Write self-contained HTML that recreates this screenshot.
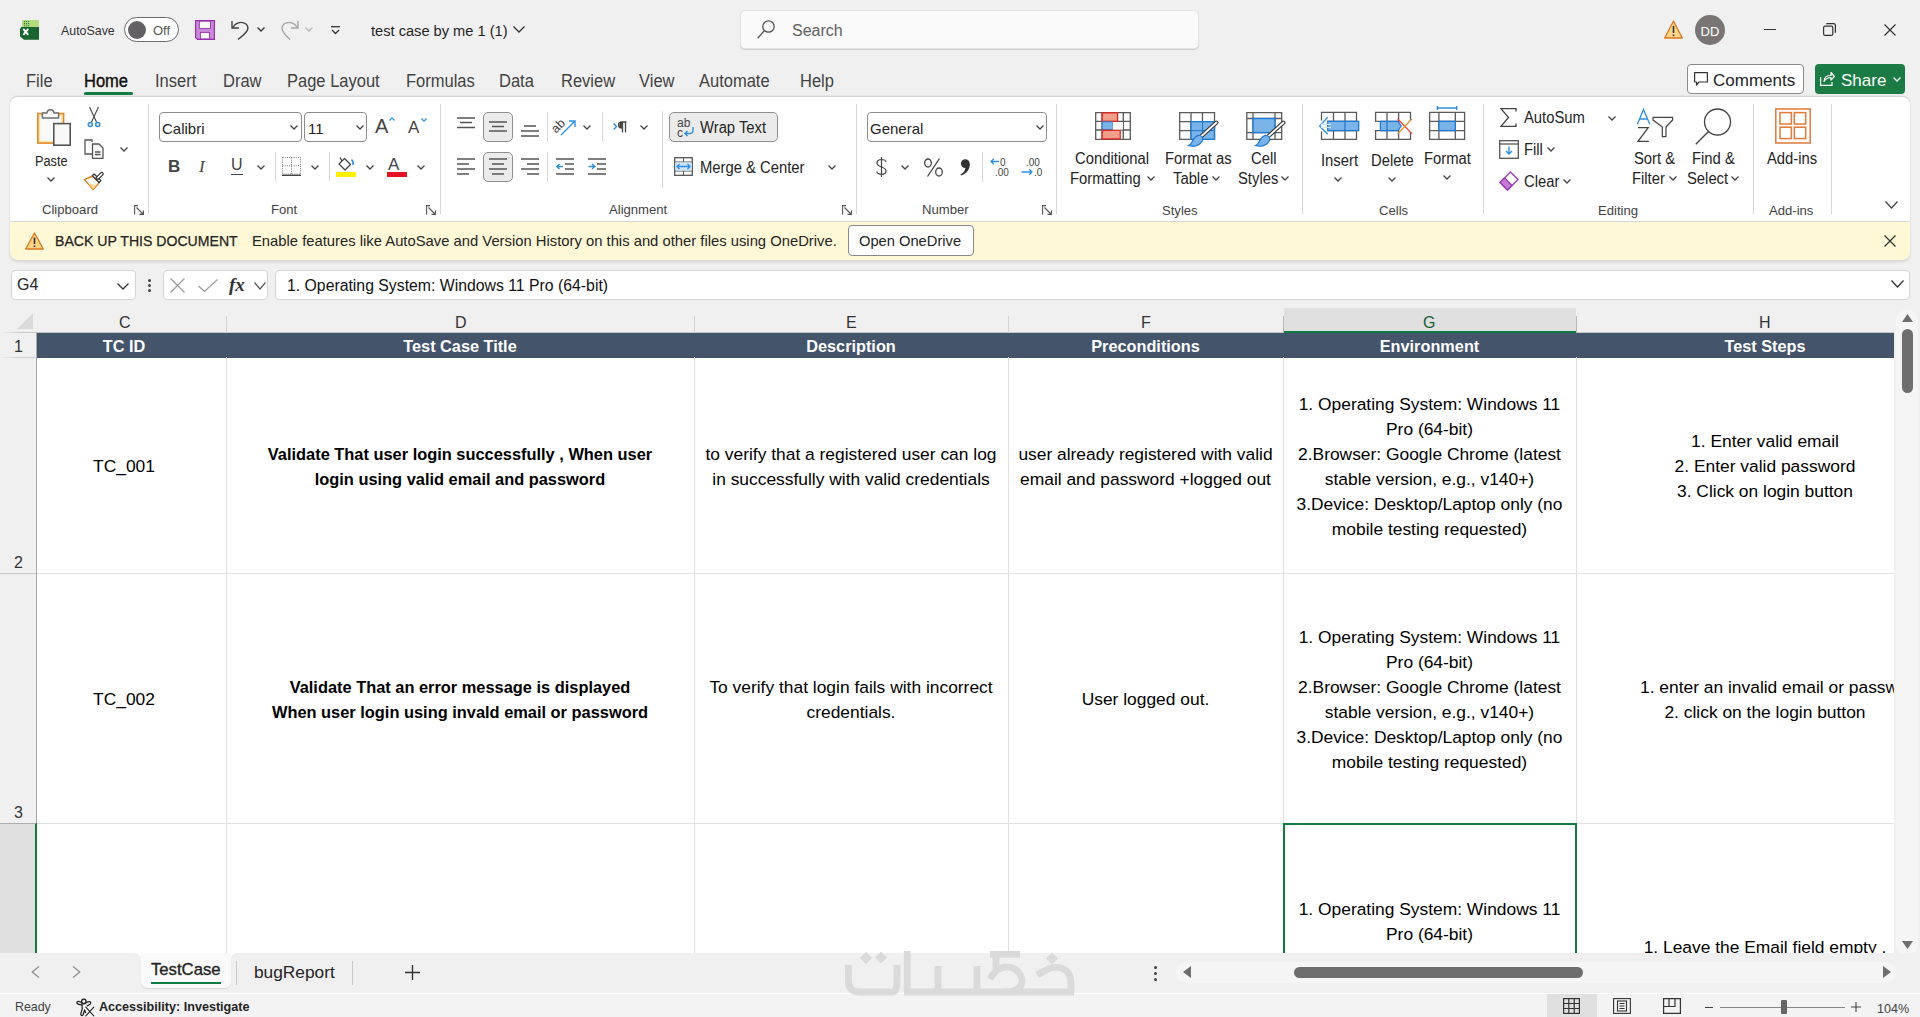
<!DOCTYPE html>
<html><head><meta charset="utf-8">
<style>
*{margin:0;padding:0;box-sizing:border-box}
html,body{width:1920px;height:1017px;overflow:hidden;background:#f0f0f0;font-family:"Liberation Sans",sans-serif;color:#242424}
.a{position:absolute}
.t{position:absolute;white-space:nowrap;line-height:1}
svg{position:absolute;overflow:visible}
/* ribbon */
#ribbon{position:absolute;left:10px;top:97px;width:1900px;height:125px;background:#fff;border-radius:8px 8px 0 0;box-shadow:0 -0.5px 2px rgba(0,0,0,.15);border-bottom:1px solid #d6d6d6}
.sep{position:absolute;width:1px;background:#d6d6d6}
.glab{position:absolute;font-size:13px;color:#333;white-space:nowrap;line-height:1}
.dd{position:absolute;background:#fff;border:1px solid #8c8c8c;border-radius:4px}
/* grid */
#grid{position:absolute;left:0;top:308px;width:1920px;height:645px;overflow:hidden}
.cell{position:absolute;display:flex;align-items:center;justify-content:center;text-align:center;font-size:17.4px;line-height:25px;color:#000;padding-top:2px}
.colh{font-size:16px;color:#333}
.rowh{font-size:16px;color:#333}
.gl{background:#e1e1e1}
.hd{position:absolute;top:26px;height:24px;display:flex;align-items:center;justify-content:center;color:#fff;font-weight:700;font-size:16.3px;white-space:nowrap}
.cell.b{font-weight:700;font-size:16.4px}
.mt{top:73px;font-size:17.5px;color:#424242;transform:scaleX(.943);transform-origin:0 0}
.rl{font-size:16px;color:#242424;transform:scaleX(.925);transform-origin:0 0}
.glab{font-size:13.1px;color:#424242}
.chv{fill:none;stroke:#444;stroke-width:1.3}
.lch{fill:none;stroke:#555;stroke-width:1.1}
.ln{fill:none;stroke:#555;stroke-width:1.3}
.selb{position:absolute;background:#ebebeb;border:1px solid #8f8f8f;border-radius:5px}
</style></head>
<body>
<!-- TITLE BAR -->
<div id="title">
 <!-- excel icon -->
 <svg style="left:20px;top:20px" width="20" height="20" viewBox="0 0 20 20">
  <path d="M2 1 Q2 0 3 0 H18 Q19 0 19 1 V7 H2Z" fill="#b3dd7c"/>
  <g fill="#1f6b34"><circle cx="4.5" cy="1.6" r="0.65"/><circle cx="6.6" cy="1.6" r="0.65"/><circle cx="8.7" cy="1.6" r="0.65"/><circle cx="4.5" cy="3.7" r="0.65"/><circle cx="6.6" cy="3.7" r="0.65"/><circle cx="8.7" cy="3.7" r="0.65"/><circle cx="4.5" cy="5.8" r="0.65"/><circle cx="6.6" cy="5.8" r="0.65"/><circle cx="8.7" cy="5.8" r="0.65"/></g>
  <path d="M1.5 7 H19 V19.8 H4 L0 16.5 V8.5Z" fill="#19652f"/>
  <path d="M3.3 8.8 L8.2 14.8 M8.2 8.8 L3.3 14.8" stroke="#fff" stroke-width="1.9"/>
 </svg>
 <div class="t" style="left:61px;top:25px;font-size:12.4px;color:#333">AutoSave</div>
 <div class="a" style="left:124px;top:17px;width:55px;height:25px;border:1px solid #6b6b6b;border-radius:13px;background:#fff"></div>
 <div class="a" style="left:128px;top:21px;width:18px;height:18px;border-radius:50%;background:#636163"></div>
 <div class="t" style="left:153px;top:24px;font-size:13px;color:#555">Off</div>
 <!-- save -->
 <svg style="left:195px;top:20px" width="20" height="20" viewBox="0 0 20 20">
  <path d="M0.6 0.6 H19.4 V19.4 H2.5 L0.6 17.5Z" fill="#c98bd8" stroke="#9a2fae" stroke-width="1.2"/>
  <rect x="4.3" y="1.2" width="11.2" height="7.2" fill="#fafafa" stroke="#9a2fae" stroke-width="0.9"/>
  <rect x="5.4" y="12.4" width="9.2" height="6.5" fill="#fafafa" stroke="#9a2fae" stroke-width="0.9"/>
 </svg>
 <!-- undo -->
 <svg style="left:231px;top:20px" width="20" height="20" viewBox="0 0 20 20" fill="none" stroke="#424242" stroke-width="1.4">
  <path d="M1 1 V8 H8"/><path d="M1.5 8 C4 3 10 0.5 15 4 C19 8 17 12 7 19.5"/>
 </svg>
 <svg style="left:257px;top:27px" width="8" height="5" viewBox="0 0 8 5" fill="none" stroke="#333" stroke-width="1.3"><path d="M0.5 0.5 L4 4 L7.5 0.5"/></svg>
 <!-- redo -->
 <svg style="left:279px;top:20px" width="20" height="20" viewBox="0 0 20 20" fill="none" stroke="#a6a6a6" stroke-width="1.4">
  <path d="M19 1 V8 H12"/><path d="M18.5 8 C16 3 10 0.5 5 4 C1 8 3 12 11 19.5"/>
 </svg>
 <svg style="left:305px;top:27px" width="8" height="5" viewBox="0 0 8 5" fill="none" stroke="#b8b8b8" stroke-width="1.3"><path d="M0.5 0.5 L4 4 L7.5 0.5"/></svg>
 <svg style="left:331px;top:26px" width="9" height="9" viewBox="0 0 9 9" fill="none" stroke="#333" stroke-width="1.3"><path d="M0 0.7 H9"/><path d="M1 4 L4.5 7.5 L8 4"/></svg>
 <div class="t" style="left:371px;top:23px;font-size:15.4px;color:#242424;transform:scaleX(.95);transform-origin:0 0">test case by me 1 (1)</div>
 <svg style="left:513px;top:26px" width="12" height="7" viewBox="0 0 12 7" fill="none" stroke="#333" stroke-width="1.3"><path d="M0.5 0.5 L6 6 L11.5 0.5"/></svg>
 <!-- search -->
 <div class="a" style="left:740px;top:10px;width:459px;height:39px;background:#fafafa;border:1px solid #e3e3e3;border-radius:5px;box-shadow:0 1px 1px rgba(0,0,0,.15)"></div>
 <svg style="left:757px;top:20px" width="18" height="19" viewBox="0 0 18 19" fill="none" stroke="#555" stroke-width="1.3"><circle cx="11.5" cy="6.5" r="5.7"/><path d="M7.5 10.5 L0.7 18.3"/></svg>
 <div class="t" style="left:792px;top:23px;font-size:16px;color:#616161">Search</div>
 <!-- right -->
 <svg style="left:1664px;top:20px" width="19" height="19" viewBox="0 0 19 19"><path d="M9.5 1 L18.3 18 H0.7Z" fill="#fcd589" stroke="#d9781f" stroke-width="1.3" stroke-linejoin="round"/><rect x="8.7" y="6" width="1.6" height="7" fill="#333"/><rect x="8.7" y="14.5" width="1.6" height="1.6" fill="#333"/></svg>
 <div class="a" style="left:1695px;top:15px;width:30px;height:30px;border-radius:50%;background:#7a7575"></div>
 <div class="t" style="left:1699px;top:25px;font-size:13px;color:#fff;width:22px;text-align:center">DD</div>
 <div class="a" style="left:1764px;top:29px;width:12px;height:1.3px;background:#333"></div>
 <svg style="left:1823px;top:23px" width="13" height="13" viewBox="0 0 13 13" fill="none" stroke="#333" stroke-width="1.2"><rect x="0.6" y="3.2" width="9.2" height="9.2" rx="1.5"/><path d="M3.2 1.2 C3.5 0.8 4 0.6 4.5 0.6 H10.5 C11.6 0.6 12.4 1.4 12.4 2.5 V8.5 C12.4 9 12.2 9.5 11.8 9.8"/></svg>
 <svg style="left:1884px;top:24px" width="12" height="12" viewBox="0 0 12 12" fill="none" stroke="#333" stroke-width="1.2"><path d="M0.5 0.5 L11.5 11.5 M11.5 0.5 L0.5 11.5"/></svg>
</div>
<!-- MENU -->
<div id="menu">
 <div class="t mt" style="left:26px">File</div>
 <div class="t mt" style="left:84px;color:#111;-webkit-text-stroke:0.4px #111">Home</div>
 <div class="a" style="left:84px;top:92px;width:49px;height:3px;border-radius:2px;background:#107c41"></div>
 <div class="t mt" style="left:155px">Insert</div>
 <div class="t mt" style="left:223px">Draw</div>
 <div class="t mt" style="left:287px">Page Layout</div>
 <div class="t mt" style="left:406px">Formulas</div>
 <div class="t mt" style="left:499px">Data</div>
 <div class="t mt" style="left:561px">Review</div>
 <div class="t mt" style="left:639px">View</div>
 <div class="t mt" style="left:699px">Automate</div>
 <div class="t mt" style="left:800px">Help</div>
 <div class="a" style="left:1687px;top:64px;width:117px;height:30px;background:#fff;border:1px solid #8a8a8a;border-radius:4px"></div>
 <svg style="left:1694px;top:72px" width="15" height="15" viewBox="0 0 15 15" fill="none" stroke="#333" stroke-width="1.2"><path d="M0.6 0.6 H13.4 V10 H5 L2.5 13 V10 H0.6Z" stroke-linejoin="round"/></svg>
 <div class="t" style="left:1713px;top:72px;font-size:17px;color:#242424">Comments</div>
 <div class="a" style="left:1815px;top:64px;width:90px;height:30px;background:#1a7b45;border-radius:4px"></div>
 <svg style="left:1820px;top:71px" width="15" height="15" viewBox="0 0 15 15" fill="none" stroke="#fff" stroke-width="1.2"><path d="M0.6 6 V14.4 H12 V11"/><path d="M4 10.5 C4 6 7 4.5 11 4.5 V1.5 L14.4 5.5 L11 9 V6.5 C7.5 6.5 5.5 8 4 10.5Z" stroke-linejoin="round"/></svg>
 <div class="t" style="left:1841px;top:72px;font-size:17px;color:#fff">Share</div>
 <svg style="left:1893px;top:77px" width="8" height="5" viewBox="0 0 8 5" fill="none" stroke="#fff" stroke-width="1.3"><path d="M0.5 0.5 L4 4 L7.5 0.5"/></svg>
</div>
<!-- RIBBON -->
<div id="ribbon"></div>
<div id="rb">
 <!-- CLIPBOARD -->
 <svg style="left:37px;top:108px" width="34" height="38" viewBox="0 0 34 38">
  <rect x="0.8" y="5.5" width="25.8" height="29.6" fill="#fde3a8" stroke="#e08a2c" stroke-width="1.6"/>
  <rect x="3.2" y="8" width="21" height="24.8" fill="#f8f9fa"/>
  <path d="M5.4 10 V5 H10 C10.3 0.6 16.7 0.6 17 5 H21.6 V10Z" fill="#fafafa" stroke="#6e6e6e" stroke-width="1.5" stroke-linejoin="round"/>
  <rect x="16.8" y="15.6" width="16.4" height="21.6" fill="#f8f8f8" stroke="#555" stroke-width="1.6"/>
 </svg>
 <div class="t rl" style="left:35px;top:154px;font-size:14px;transform:scaleX(.91)">Paste</div>
 <svg class="chv" style="left:47px;top:177px" width="8" height="5" viewBox="0 0 8 5"><path d="M0.5 0.5 L4 4 L7.5 0.5"/></svg>
 <svg style="left:87px;top:107px" width="14" height="20" viewBox="0 0 14 20" fill="none">
  <path d="M2.5 0 L9.5 15 M11.5 0 L4.5 15" stroke="#444" stroke-width="1.1"/>
  <circle cx="3.3" cy="17.5" r="2" stroke="#2f8ee0" stroke-width="1.6"/><circle cx="10.7" cy="17.5" r="2" stroke="#2f8ee0" stroke-width="1.6"/>
 </svg>
 <svg style="left:84px;top:139px" width="20" height="20" viewBox="0 0 20 20" fill="none" stroke="#555" stroke-width="1.3">
  <path d="M8 3 V1 H1 V15 H8"/><path d="M8.5 5 H15 L19 9 V19.3 H8.5Z" fill="#fafafa" stroke-linejoin="round"/><path d="M11 13 H16.5 M11 15.5 H16.5"/>
 </svg>
 <svg class="chv" style="left:120px;top:147px" width="8" height="5" viewBox="0 0 8 5"><path d="M0.5 0.5 L4 4 L7.5 0.5"/></svg>
 <svg style="left:84px;top:171px" width="20" height="20" viewBox="0 0 20 20">
  <path d="M0.4 8.6 L8.6 5 L15.2 11.6 L9.2 18.6Z" fill="#fff" stroke="#e07a1a" stroke-width="1.4" stroke-linejoin="round"/>
  <path d="M4.3 12.8 L12.6 14 L9.2 18.3Z" fill="#fcd38a"/>
  <path d="M8.3 4.8 L10.2 3 L16.9 9.7 L15.1 11.5Z" fill="#fff" stroke="#333" stroke-width="1.2" stroke-linejoin="round"/>
  <path d="M12 6.6 L16.8 1.8 C17.4 1.2 18.3 1.2 18.8 1.8 C19.4 2.4 19.4 3.2 18.8 3.8 L14 8.6Z" fill="#fff" stroke="#333" stroke-width="1.2" stroke-linejoin="round"/>
 </svg>
 <div class="t glab" style="left:42px;top:203px">Clipboard</div>
 <svg class="lch" style="left:134px;top:205px" width="10" height="10" viewBox="0 0 10 10"><path d="M0.6 9.4 V0.6 H4 M9.4 6 V9.4 H6 M2.5 2.5 L9 9"/><path d="M9.4 5.5 V9.4 H5.5" /></svg>
 <div class="sep" style="left:148px;top:104px;height:110px"></div>
 <!-- FONT -->
 <div class="dd" style="left:159px;top:112px;width:143px;height:30px"></div>
 <div class="t" style="left:162px;top:121px;font-size:15px;color:#242424">Calibri</div>
 <svg class="chv" style="left:290px;top:125px" width="8" height="5" viewBox="0 0 8 5"><path d="M0.5 0.5 L4 4 L7.5 0.5"/></svg>
 <div class="dd" style="left:304px;top:112px;width:63px;height:30px"></div>
 <div class="t" style="left:308px;top:121px;font-size:15px;color:#242424">11</div>
 <svg class="chv" style="left:356px;top:125px" width="8" height="5" viewBox="0 0 8 5"><path d="M0.5 0.5 L4 4 L7.5 0.5"/></svg>
 <div class="t" style="left:375px;top:116px;font-size:20px;color:#444">A</div>
 <svg style="left:389px;top:117px" width="6" height="4" viewBox="0 0 6 4" fill="none" stroke="#2f8ee0" stroke-width="1.2"><path d="M0.5 3.5 L3 0.8 L5.5 3.5"/></svg>
 <div class="t" style="left:408px;top:119px;font-size:17px;color:#444">A</div>
 <svg style="left:421px;top:118px" width="6" height="4" viewBox="0 0 6 4" fill="none" stroke="#2f8ee0" stroke-width="1.2"><path d="M0.5 0.5 L3 3.2 L5.5 0.5"/></svg>
 <div class="t" style="left:168px;top:158px;font-size:17px;font-weight:700;color:#444">B</div>
 <div class="t" style="left:199px;top:158px;font-size:17px;font-style:italic;font-family:'Liberation Serif',serif;color:#444">I</div>
 <div class="t" style="left:231px;top:157px;font-size:16px;color:#444">U</div>
 <div class="a" style="left:231px;top:174px;width:12px;height:1.2px;background:#444"></div>
 <svg class="chv" style="left:257px;top:165px" width="8" height="5" viewBox="0 0 8 5"><path d="M0.5 0.5 L4 4 L7.5 0.5"/></svg>
 <div class="sep" style="left:275px;top:152px;height:29px"></div>
 <svg style="left:282px;top:157px" width="19" height="19" viewBox="0 0 19 19" fill="none">
  <path d="M0.5 0.5 H18.5 V17 H0.5Z M9.5 0.5 V17 M0.5 8.8 H18.5" stroke="#777" stroke-width="1" stroke-dasharray="1 1.2"/>
  <path d="M0 18.3 H19" stroke="#444" stroke-width="1.4"/>
 </svg>
 <svg class="chv" style="left:311px;top:165px" width="8" height="5" viewBox="0 0 8 5"><path d="M0.5 0.5 L4 4 L7.5 0.5"/></svg>
 <div class="sep" style="left:329px;top:152px;height:29px"></div>
 <svg style="left:336px;top:156px" width="20" height="22" viewBox="0 0 20 22">
  <path d="M3 8 L8.5 2.5 L14.5 8.5 L9 14Z" fill="#fff" stroke="#444" stroke-width="1.3" stroke-linejoin="round"/>
  <path d="M6 5 L4 1.5" stroke="#444" stroke-width="1.3"/>
  <path d="M15.5 3.5 C17 5 17.5 7 17 9" fill="none" stroke="#2f8ee0" stroke-width="1.6"/>
  <rect x="0" y="16" width="20" height="5" fill="#ffef00"/>
 </svg>
 <svg class="chv" style="left:366px;top:165px" width="8" height="5" viewBox="0 0 8 5"><path d="M0.5 0.5 L4 4 L7.5 0.5"/></svg>
 <div class="t" style="left:388px;top:156px;font-size:17px;color:#444">A</div>
 <div class="a" style="left:387px;top:172px;width:20px;height:5px;background:#e81123"></div>
 <svg class="chv" style="left:417px;top:165px" width="8" height="5" viewBox="0 0 8 5"><path d="M0.5 0.5 L4 4 L7.5 0.5"/></svg>
 <div class="t glab" style="left:271px;top:203px">Font</div>
 <svg class="lch" style="left:426px;top:205px" width="10" height="10" viewBox="0 0 10 10"><path d="M0.6 9.4 V0.6 H4 M2.5 2.5 L9 9 M9.4 5.5 V9.4 H5.5"/></svg>
 <div class="sep" style="left:440px;top:104px;height:110px"></div>
 <!-- ALIGNMENT -->
 <svg class="ln" style="left:457px;top:117px" width="18" height="12" viewBox="0 0 18 12"><path d="M0 1 H18 M3 5.5 H15 M0 10.5 H18"/></svg>
 <div class="selb" style="left:483px;top:112px;width:30px;height:30px"></div>
 <svg class="ln" style="left:489px;top:121px" width="18" height="11" viewBox="0 0 18 11"><path d="M0 1 H18 M3 5.5 H15 M0 10 H18"/></svg>
 <svg class="ln" style="left:521px;top:125px" width="18" height="12" viewBox="0 0 18 12"><path d="M3 1 H15 M0 6 H18 M0 11 H18"/></svg>
 <div class="sep" style="left:547px;top:112px;height:30px"></div>
 <svg style="left:555px;top:116px" width="21" height="20" viewBox="0 0 21 20" fill="none">
  <text x="-3" y="12" transform="rotate(-45 6 10)" font-family="Liberation Sans" font-size="12.5" fill="#444">ab</text>
  <path d="M6 19 L20 5 M14 5 H20 V11" stroke="#2f8ee0" stroke-width="1.4"/>
 </svg>
 <svg class="chv" style="left:583px;top:125px" width="8" height="5" viewBox="0 0 8 5"><path d="M0.5 0.5 L4 4 L7.5 0.5"/></svg>
 <div class="sep" style="left:602px;top:112px;height:30px"></div>
 <svg style="left:613px;top:121px" width="15" height="12" viewBox="0 0 15 12" fill="none">
  <path d="M0.7 2.5 L3.5 5.5 L0.7 8.5" stroke="#2f8ee0" stroke-width="1.4"/>
  <path d="M9.5 1 V11.5 M12.5 1 V11.5 M13.5 1 H9 C6.5 1 5.5 2.5 5.5 4 C5.5 5.5 6.5 7 9 7" stroke="#444" stroke-width="1.3"/>
  <path d="M9 1.5 C7 1.5 6.2 2.8 6.2 4 C6.2 5.2 7 6.5 9 6.5Z" fill="#444"/>
 </svg>
 <svg class="chv" style="left:640px;top:125px" width="8" height="5" viewBox="0 0 8 5"><path d="M0.5 0.5 L4 4 L7.5 0.5"/></svg>
 <div class="sep" style="left:662px;top:111px;height:77px"></div>
 <div class="selb" style="left:669px;top:112px;width:109px;height:30px"></div>
 <svg style="left:677px;top:118px" width="18" height="19" viewBox="0 0 18 19" fill="none">
  <text x="0" y="9" font-family="Liberation Sans" font-size="12" fill="#444">ab</text>
  <text x="0" y="18.5" font-family="Liberation Sans" font-size="12" fill="#444">c</text>
  <path d="M16 9 V12.5 C16 14.5 14.5 15.5 12.5 15.5 H8 M10.5 13 L8 15.5 L10.5 18" stroke="#2f8ee0" stroke-width="1.4"/>
 </svg>
 <div class="t rl" style="left:700px;top:120px">Wrap Text</div>
 <svg class="ln" style="left:457px;top:158px" width="18" height="17" viewBox="0 0 18 17"><path d="M0 1 H18 M0 6 H12 M0 11 H18 M0 16 H12"/></svg>
 <div class="selb" style="left:483px;top:152px;width:30px;height:30px"></div>
 <svg class="ln" style="left:489px;top:158px" width="18" height="17" viewBox="0 0 18 17"><path d="M0 1 H18 M3 6 H15 M0 11 H18 M3 16 H15"/></svg>
 <svg class="ln" style="left:521px;top:158px" width="18" height="17" viewBox="0 0 18 17"><path d="M0 1 H18 M6 6 H18 M0 11 H18 M6 16 H18"/></svg>
 <div class="sep" style="left:547px;top:152px;height:30px"></div>
 <svg style="left:556px;top:158px" width="18" height="17" viewBox="0 0 18 17" fill="none">
  <path d="M0 1 H18 M9 6 H18 M9 11 H18 M0 16 H18" stroke="#555" stroke-width="1.3"/>
  <path d="M7 8.5 H0.8 M3.5 6 L0.8 8.5 L3.5 11" stroke="#2f8ee0" stroke-width="1.4"/>
 </svg>
 <svg style="left:588px;top:158px" width="18" height="17" viewBox="0 0 18 17" fill="none">
  <path d="M0 1 H18 M9 6 H18 M9 11 H18 M0 16 H18" stroke="#555" stroke-width="1.3"/>
  <path d="M0.5 8.5 H6.5 M4 6 L6.8 8.5 L4 11" stroke="#2f8ee0" stroke-width="1.4"/>
 </svg>
 <svg style="left:674px;top:157px" width="19" height="19" viewBox="0 0 19 19" fill="none">
  <rect x="0.7" y="0.7" width="17.6" height="17.6" stroke="#555" stroke-width="1.3"/>
  <path d="M0.7 5 H18.3 M0.7 14 H18.3 M9.5 0.7 V5 M9.5 14 V18.3" stroke="#555" stroke-width="1"/>
  <rect x="1.4" y="5.4" width="16.2" height="8.2" fill="#cfe4fa"/>
  <path d="M3 9.5 H16 M5.5 7 L3 9.5 L5.5 12 M13.5 7 L16 9.5 L13.5 12" stroke="#2f8ee0" stroke-width="1.3"/>
 </svg>
 <div class="t rl" style="left:700px;top:160px">Merge &amp; Center</div>
 <svg class="chv" style="left:828px;top:165px" width="8" height="5" viewBox="0 0 8 5"><path d="M0.5 0.5 L4 4 L7.5 0.5"/></svg>
 <div class="t glab" style="left:609px;top:203px">Alignment</div>
 <svg class="lch" style="left:842px;top:205px" width="10" height="10" viewBox="0 0 10 10"><path d="M0.6 9.4 V0.6 H4 M2.5 2.5 L9 9 M9.4 5.5 V9.4 H5.5"/></svg>
 <div class="sep" style="left:856px;top:104px;height:110px"></div>
 <!-- NUMBER -->
 <div class="dd" style="left:867px;top:112px;width:180px;height:30px"></div>
 <div class="t" style="left:870px;top:121px;font-size:15px;color:#242424">General</div>
 <svg class="chv" style="left:1036px;top:125px" width="8" height="5" viewBox="0 0 8 5"><path d="M0.5 0.5 L4 4 L7.5 0.5"/></svg>
 <svg style="left:876px;top:157px" width="11" height="20" viewBox="0 0 11 20" fill="none" stroke="#444" stroke-width="1.2"><path d="M10 5 C10 3.5 8 2.5 5.5 2.5 C2.5 2.5 1 4 1 6 C1 8.5 3.5 9.3 5.5 10 C8 10.8 10 11.8 10 14 C10 16.3 8.3 17.3 5.5 17.3 C2.5 17.3 0.8 16 0.8 14.5 M5.5 0 V20"/></svg>
 <svg class="chv" style="left:901px;top:165px" width="8" height="5" viewBox="0 0 8 5"><path d="M0.5 0.5 L4 4 L7.5 0.5"/></svg>
 <svg style="left:924px;top:158px" width="19" height="19" viewBox="0 0 19 19" fill="none" stroke="#444" stroke-width="1.3"><ellipse cx="4" cy="5" rx="3.3" ry="4"/><ellipse cx="15" cy="14" rx="3.3" ry="4"/><path d="M15.5 0.5 L3.5 18.5"/></svg>
 <svg style="left:960px;top:159px" width="11" height="17" viewBox="0 0 11 17"><circle cx="5.3" cy="4.6" r="4.4" fill="#333"/><path d="M9.7 4.6 C10.3 10 6.5 15 1 16.5 L0.5 15.5 C4 13.5 5.5 11 5.3 8.5Z" fill="#333"/></svg>
 <div class="sep" style="left:982px;top:152px;height:30px"></div>
 <svg style="left:990px;top:157px" width="20" height="20" viewBox="0 0 20 20">
  <text x="10" y="8.5" font-family="Liberation Sans" font-size="10" fill="#444">0</text>
  <text x="5" y="19" font-family="Liberation Sans" font-size="10" fill="#444">.00</text>
  <path d="M9 4.5 H1 M3.8 1.7 L1 4.5 L3.8 7.3" fill="none" stroke="#2f8ee0" stroke-width="1.3"/>
 </svg>
 <svg style="left:1021px;top:157px" width="21" height="20" viewBox="0 0 21 20">
  <text x="5" y="8.5" font-family="Liberation Sans" font-size="10" fill="#444">.00</text>
  <text x="13" y="19" font-family="Liberation Sans" font-size="10" fill="#444">.0</text>
  <path d="M0.5 15 H11 M8.2 12.2 L11 15 L8.2 17.8" fill="none" stroke="#2f8ee0" stroke-width="1.3"/>
 </svg>
 <div class="t glab" style="left:922px;top:203px">Number</div>
 <svg class="lch" style="left:1042px;top:205px" width="10" height="10" viewBox="0 0 10 10"><path d="M0.6 9.4 V0.6 H4 M2.5 2.5 L9 9 M9.4 5.5 V9.4 H5.5"/></svg>
 <div class="sep" style="left:1056px;top:104px;height:110px"></div>
 <!-- STYLES -->
 <svg style="left:1095px;top:112px" width="36" height="28" viewBox="0 0 36 28" fill="none">
  <path d="M0.7 0.7 H35.3 V27.3 H0.7Z M0.7 9.4 H35.3 M0.7 18 H35.3 M7 0.7 V27.3 M28.3 0.7 V27.3" stroke="#5a5a5a" stroke-width="1.3"/>
  <rect x="7.2" y="0.9" width="15.4" height="8.3" fill="#f0a08a" stroke="#e8201a" stroke-width="1.2"/>
  <rect x="7.2" y="9.8" width="10.2" height="7.8" fill="#7ab3e8" stroke="#1f78d1" stroke-width="0.8"/>
  <rect x="7.2" y="18.3" width="18" height="8.6" fill="#f0a08a" stroke="#e8201a" stroke-width="1.2"/>
  <rect x="17.8" y="10" width="10" height="7.6" fill="#fff"/>
 </svg>
 <div class="t rl" style="left:1075px;top:151px">Conditional</div>
 <div class="t rl" style="left:1070px;top:171px">Formatting</div>
 <svg class="chv" style="left:1147px;top:176px" width="8" height="5" viewBox="0 0 8 5"><path d="M0.5 0.5 L4 4 L7.5 0.5"/></svg>
 <svg style="left:1179px;top:112px" width="40" height="35" viewBox="0 0 40 35" fill="none">
  <path d="M0.7 0.7 H35.5 V27.3 H0.7Z M0.7 9.7 H35.5 M0.7 18.6 H35.5 M12 0.7 V27.3 M23.5 0.7 V27.3" stroke="#5a5a5a" stroke-width="1.3"/>
  <rect x="12" y="9.7" width="23.5" height="17.6" fill="#7ab3e8" stroke="#1f78d1" stroke-width="1.3"/>
  <path d="M23.5 9.7 V27.3 M12 18.6 H35.5" stroke="#1f78d1" stroke-width="1"/>
  <path d="M37.5 10.5 L21.5 25" stroke="#333" stroke-width="4" stroke-linecap="round"/>
  <path d="M37.5 10.5 L21.5 25" stroke="#fff" stroke-width="1.8" stroke-linecap="round"/>
  <path d="M20.5 23.5 C16.5 23 14.5 27 13 30 C12 32 11 33 9.5 33.5 C14 35 21 34 23.5 28.5 C24.5 26.5 23 24 20.5 23.5Z" fill="#7ab3e8" stroke="#1f78d1" stroke-width="1.2"/>
 </svg>
 <div class="t rl" style="left:1165px;top:151px">Format as</div>
 <div class="t rl" style="left:1173px;top:171px">Table</div>
 <svg class="chv" style="left:1212px;top:176px" width="8" height="5" viewBox="0 0 8 5"><path d="M0.5 0.5 L4 4 L7.5 0.5"/></svg>
 <svg style="left:1246px;top:112px" width="40" height="35" viewBox="0 0 40 35" fill="none">
  <path d="M0.8 0.7 H35.7 V27.3 H0.8Z M0.8 6.5 H35.7 M0.8 20.6 H35.7 M7 0.7 V27.3 M29 0.7 V27.3" stroke="#5a5a5a" stroke-width="1.3"/>
  <rect x="7" y="6.5" width="22" height="14.1" fill="#7ab3e8" stroke="#1f78d1" stroke-width="1.3"/>
  <path d="M37.5 10.5 L21.5 25" stroke="#333" stroke-width="4" stroke-linecap="round"/>
  <path d="M37.5 10.5 L21.5 25" stroke="#fff" stroke-width="1.8" stroke-linecap="round"/>
  <path d="M20.5 23.5 C16.5 23 14.5 27 13 30 C12 32 11 33 9.5 33.5 C14 35 21 34 23.5 28.5 C24.5 26.5 23 24 20.5 23.5Z" fill="#7ab3e8" stroke="#1f78d1" stroke-width="1.2"/>
 </svg>
 <div class="t rl" style="left:1251px;top:151px">Cell</div>
 <div class="t rl" style="left:1238px;top:171px">Styles</div>
 <svg class="chv" style="left:1281px;top:176px" width="8" height="5" viewBox="0 0 8 5"><path d="M0.5 0.5 L4 4 L7.5 0.5"/></svg>
 <div class="t glab" style="left:1162px;top:204px">Styles</div>
 <div class="sep" style="left:1302px;top:104px;height:110px"></div>
 <!-- CELLS -->
 <svg style="left:1319px;top:111px" width="41" height="30" viewBox="0 0 41 30" fill="none">
  <path d="M2.5 1.4 H37.5 V28.4 H2.5Z M2.5 10.3 H37.5 M2.5 19.6 H37.5 M14.5 1.4 V28.4 M26 1.4 V28.4" stroke="#5a5a5a" stroke-width="1.3"/>
  <rect x="1" y="9.5" width="8" height="11" fill="#fff"/>
  <rect x="8.7" y="10.3" width="31" height="9.3" fill="#7ab3e8" stroke="#1f78d1" stroke-width="1.3"/>
  <path d="M26 10.3 V19.6" stroke="#1f78d1" stroke-width="1.3"/>
  <path d="M8.7 6.3 L0.6 14.9 L8.7 23.2" stroke="#2f8ee0" stroke-width="1.3"/>
  <path d="M2 13.3 H12 M2 16.5 H12" stroke="#cfe6fb" stroke-width="1.2"/>
 </svg>
 <div class="t rl" style="left:1321px;top:153px">Insert</div>
 <svg class="chv" style="left:1334px;top:177px" width="8" height="5" viewBox="0 0 8 5"><path d="M0.5 0.5 L4 4 L7.5 0.5"/></svg>
 <svg style="left:1375px;top:111px" width="38" height="30" viewBox="0 0 38 30" fill="none">
  <path d="M0.6 1.4 H35.5 V28.4 H0.6Z M0.6 10.3 H35.5 M0.6 19.6 H35.5 M12 1.4 V28.4 M23.6 1.4 V28.4" stroke="#5a5a5a" stroke-width="1.3"/>
  <rect x="0" y="10.9" width="5" height="8.1" fill="#fff"/>
  <rect x="24.2" y="9" width="13" height="12" fill="#fff"/>
  <path d="M5.4 10.3 H23 L26.2 15 L23 19.6 H5.4Z" fill="#7ab3e8" stroke="#1f78d1" stroke-width="1.3" stroke-linejoin="round"/>
  <path d="M12 10.3 V19.6" stroke="#1f78d1" stroke-width="1.2"/>
  <path d="M22.7 8 L36.9 22.6" stroke="#e8412a" stroke-width="1.3"/>
  <path d="M22.7 22.6 L36.9 8" stroke="#e08a2c" stroke-width="1.3"/>
 </svg>
 <div class="t rl" style="left:1371px;top:153px">Delete</div>
 <svg class="chv" style="left:1388px;top:177px" width="8" height="5" viewBox="0 0 8 5"><path d="M0.5 0.5 L4 4 L7.5 0.5"/></svg>
 <svg style="left:1429px;top:105px" width="36" height="36" viewBox="0 0 36 36" fill="none">
  <path d="M8.3 3 H27.7 M8.3 1 V5 M27.7 1 V5" stroke="#2f8ee0" stroke-width="1.4"/>
  <path d="M0.6 7.4 H35.6 V34.4 H0.6Z M0.6 16.3 H35.6 M0.6 25.6 H35.6 M9.9 7.4 V34.4 M26.3 7.4 V34.4" stroke="#5a5a5a" stroke-width="1.3"/>
  <rect x="9.9" y="16.3" width="16.4" height="9.3" fill="#7ab3e8" stroke="#1f78d1" stroke-width="1.3"/>
 </svg>
 <div class="t rl" style="left:1424px;top:151px">Format</div>
 <svg class="chv" style="left:1443px;top:175px" width="8" height="5" viewBox="0 0 8 5"><path d="M0.5 0.5 L4 4 L7.5 0.5"/></svg>
 <div class="t glab" style="left:1379px;top:204px">Cells</div>
 <div class="sep" style="left:1483px;top:104px;height:110px"></div>
 <!-- EDITING -->
 <svg style="left:1500px;top:108px" width="17" height="19" viewBox="0 0 17 19" fill="none"><path d="M16 3.5 V0.7 H1 L8.5 9.5 L1 18.3 H16 V15.5" stroke="#444" stroke-width="1.3" stroke-linejoin="miter"/></svg>
 <div class="t rl" style="left:1524px;top:110px">AutoSum</div>
 <svg class="chv" style="left:1608px;top:116px" width="8" height="5" viewBox="0 0 8 5"><path d="M0.5 0.5 L4 4 L7.5 0.5"/></svg>
 <svg style="left:1499px;top:140px" width="20" height="19" viewBox="0 0 20 19" fill="none">
  <rect x="0.7" y="0.7" width="18.6" height="17.6" stroke="#555" stroke-width="1.3"/><path d="M0.7 4 H19.3" stroke="#555" stroke-width="1.3"/>
  <path d="M10 6.5 V14 M7 11 L10 14 L13 11" stroke="#2f8ee0" stroke-width="1.4"/>
 </svg>
 <div class="t rl" style="left:1524px;top:142px">Fill</div>
 <svg class="chv" style="left:1547px;top:147px" width="8" height="5" viewBox="0 0 8 5"><path d="M0.5 0.5 L4 4 L7.5 0.5"/></svg>
 <svg style="left:1499px;top:171px" width="20" height="20" viewBox="0 0 20 20">
  <path d="M1 11.5 L11.5 1 L19 8.5 L8.5 19Z" fill="#fff" stroke="#9b3db0" stroke-width="1.4" stroke-linejoin="round"/>
  <path d="M1 11.5 L5.5 7 L13 14.5 L8.5 19Z" fill="#c77ad6" stroke="#9b3db0" stroke-width="1.4" stroke-linejoin="round"/>
 </svg>
 <div class="t rl" style="left:1524px;top:174px">Clear</div>
 <svg class="chv" style="left:1563px;top:179px" width="8" height="5" viewBox="0 0 8 5"><path d="M0.5 0.5 L4 4 L7.5 0.5"/></svg>
 <svg style="left:1636px;top:109px" width="38" height="34" viewBox="0 0 38 34" fill="none">
  <path d="M1.4 15.3 L7.5 0.5 L13.8 15.3 M3.7 10 H11.5" stroke="#2f8ee0" stroke-width="1.3"/>
  <path d="M2 18.6 H12.2 L2 32.4 H12.8" stroke="#444" stroke-width="1.3"/>
  <path d="M17 8.3 H36.6 V11 L30 18 V27.6 H26.3 V18 L17 11Z" stroke="#444" stroke-width="1.2" fill="#fafafa" stroke-linejoin="round"/>
 </svg>
 <div class="t rl" style="left:1634px;top:151px">Sort &amp;</div>
 <div class="t rl" style="left:1632px;top:171px">Filter</div>
 <svg class="chv" style="left:1669px;top:176px" width="8" height="5" viewBox="0 0 8 5"><path d="M0.5 0.5 L4 4 L7.5 0.5"/></svg>
 <svg style="left:1695px;top:108px" width="37" height="37" viewBox="0 0 37 37" fill="none">
  <circle cx="22.5" cy="14" r="13" stroke="#444" stroke-width="1.3"/><path d="M13.5 23.5 L0.8 36.2" stroke="#444" stroke-width="1.4"/>
 </svg>
 <div class="t rl" style="left:1692px;top:151px">Find &amp;</div>
 <div class="t rl" style="left:1687px;top:171px">Select</div>
 <svg class="chv" style="left:1731px;top:176px" width="8" height="5" viewBox="0 0 8 5"><path d="M0.5 0.5 L4 4 L7.5 0.5"/></svg>
 <div class="t glab" style="left:1598px;top:204px">Editing</div>
 <div class="sep" style="left:1753px;top:104px;height:110px"></div>
 <!-- ADD-INS -->
 <svg style="left:1775px;top:108px" width="36" height="36" viewBox="0 0 36 36" fill="none" stroke="#e07a3a" stroke-width="1.5">
  <rect x="0.8" y="1" width="34.4" height="34"/><rect x="5" y="4.6" width="11.4" height="11.4"/><rect x="19.3" y="4.6" width="11.4" height="11.4"/><rect x="5" y="19.2" width="11.4" height="11.4"/><rect x="19.3" y="19.2" width="11.4" height="11.4"/>
 </svg>
 <div class="t rl" style="left:1767px;top:151px">Add-ins</div>
 <div class="t glab" style="left:1769px;top:204px">Add-ins</div>
 <div class="sep" style="left:1831px;top:104px;height:110px"></div>
 <svg style="left:1885px;top:201px" width="13" height="8" viewBox="0 0 13 8" fill="none" stroke="#444" stroke-width="1.3"><path d="M0.5 0.5 L6.5 7 L12.5 0.5"/></svg>
</div>

<!-- MESSAGE BAR -->
<div class="a" style="left:10px;top:222px;width:1900px;height:38px;background:#fef8d7;border-radius:0 0 8px 8px;box-shadow:0 2px 3px rgba(0,0,0,.12)"></div>
<svg style="left:25px;top:232px" width="19" height="18" viewBox="0 0 19 18"><path d="M9.5 1 L18.3 17 H0.7Z" fill="#fcd589" stroke="#d9781f" stroke-width="1.3" stroke-linejoin="round"/><rect x="8.7" y="5.5" width="1.6" height="6.5" fill="#333"/><rect x="8.7" y="13.5" width="1.6" height="1.6" fill="#333"/></svg>
<div class="t" style="left:55px;top:234px;font-size:14.1px;color:#242424;font-weight:400;-webkit-text-stroke:0.25px #242424">BACK UP THIS DOCUMENT</div>
<div class="t" style="left:252px;top:234px;font-size:14.8px;color:#242424">Enable features like AutoSave and Version History on this and other files using OneDrive.</div>
<div class="a" style="left:848px;top:225px;width:126px;height:31px;background:#fff;border:1px solid #8a8a8a;border-radius:4px"></div>
<div class="t" style="left:859px;top:234px;font-size:14.7px;color:#242424">Open OneDrive</div>
<svg style="left:1884px;top:235px" width="12" height="12" viewBox="0 0 12 12" fill="none" stroke="#333" stroke-width="1.3"><path d="M0.5 0.5 L11.5 11.5 M11.5 0.5 L0.5 11.5"/></svg>
<!-- FORMULA BAR -->
<div class="a" style="left:11px;top:270px;width:125px;height:30px;background:#fff;border:1px solid #d4d4d4;border-radius:4px"></div>
<div class="t" style="left:17px;top:277px;font-size:16px;color:#242424">G4</div>
<svg style="left:117px;top:283px" width="12" height="7" viewBox="0 0 12 7" fill="none" stroke="#333" stroke-width="1.3"><path d="M0.5 0.5 L6 6 L11.5 0.5"/></svg>
<div class="a" style="left:148px;top:279px;width:3px;height:3px;border-radius:50%;background:#444"></div>
<div class="a" style="left:148px;top:284px;width:3px;height:3px;border-radius:50%;background:#444"></div>
<div class="a" style="left:148px;top:289px;width:3px;height:3px;border-radius:50%;background:#444"></div>
<div class="a" style="left:163px;top:270px;width:105px;height:30px;background:#fff;border:1px solid #d4d4d4;border-radius:4px"></div>
<svg style="left:170px;top:278px" width="15" height="15" viewBox="0 0 15 15" fill="none" stroke="#9a9a9a" stroke-width="1.2"><path d="M0.5 0.5 L14.5 14.5 M14.5 0.5 L0.5 14.5"/></svg>
<svg style="left:198px;top:279px" width="20" height="13" viewBox="0 0 20 13" fill="none" stroke="#9a9a9a" stroke-width="1.2"><path d="M0.5 7 L6.5 12.5 L19.5 0.5"/></svg>
<div class="t" style="left:229px;top:275px;font-size:19px;color:#333;font-family:'Liberation Serif',serif;font-style:italic;font-weight:700">fx</div>
<svg style="left:254px;top:282px" width="12" height="8" viewBox="0 0 12 8" fill="none" stroke="#555" stroke-width="1.2"><path d="M0.5 0.5 L6 7 L11.5 0.5"/></svg>
<div class="a" style="left:275px;top:270px;width:1635px;height:30px;background:#fff;border:1px solid #d4d4d4;border-radius:4px"></div>
<div class="t" style="left:287px;top:278px;font-size:15.8px;color:#111">1. Operating System: Windows 11 Pro (64-bit)</div>
<svg style="left:1891px;top:280px" width="13" height="8" viewBox="0 0 13 8" fill="none" stroke="#333" stroke-width="1.3"><path d="M0.5 0.5 L6.5 7 L12.5 0.5"/></svg>
<!-- GRID -->
<div id="grid">
 <!-- column header strip y308-332 -->
 <div class="a" style="left:0;top:0;width:1894px;height:25px;background:#f0f0f0"></div>
 <div class="a" style="left:1284px;top:0;width:292px;height:25px;background:#e0e0e0"></div>
 <div class="a" style="left:1283px;top:23px;width:294px;height:2px;background:#107c41"></div>
 <div class="a" style="left:37px;top:24px;width:1246px;height:1px;background:#c6c6c6"></div>
 <div class="a" style="left:1577px;top:24px;width:317px;height:1px;background:#c6c6c6"></div>
 <div class="a" style="left:226px;top:8px;width:1px;height:17px;background:#d4d4d4"></div>
 <div class="a" style="left:694px;top:8px;width:1px;height:17px;background:#d4d4d4"></div>
 <div class="a" style="left:1008px;top:8px;width:1px;height:17px;background:#d4d4d4"></div>
 <div class="a" style="left:1283px;top:8px;width:1px;height:17px;background:#b8b8b8"></div>
 <div class="a" style="left:1576px;top:8px;width:1px;height:17px;background:#b8b8b8"></div>
 <svg style="left:17px;top:5px" width="16" height="16"><path d="M16 0 L16 16 L0 16 Z" fill="#dadada"/></svg>
 <div class="t colh" style="left:119px;top:7px">C</div>
 <div class="t colh" style="left:455px;top:7px">D</div>
 <div class="t colh" style="left:846px;top:7px">E</div>
 <div class="t colh" style="left:1141px;top:7px">F</div>
 <div class="t colh" style="left:1423px;top:7px;color:#185c37">G</div>
 <div class="t colh" style="left:1759px;top:7px">H</div>
 <!-- row header column x0-36 -->
 <div class="a" style="left:0;top:25px;width:36px;height:620px;background:#f0f0f0"></div>
 <div class="a" style="left:0;top:516px;width:36px;height:129px;background:#e0e0e0"></div>
 <div class="a" style="left:36px;top:25px;width:1px;height:491px;background:#a8a8a8"></div>
 <div class="a" style="left:35px;top:515px;width:2px;height:130px;background:#107c41"></div>
 <div class="a" style="left:0;top:49px;width:36px;height:1px;background:linear-gradient(90deg,#f0f0f0,#d0d0d0 50%)"></div>
 <div class="a" style="left:0;top:265px;width:36px;height:1px;background:#c8c8c8"></div>
 <div class="a" style="left:0;top:515px;width:36px;height:1px;background:#b0b0b0"></div>
 <div class="t rowh" style="left:14px;top:31px">1</div>
 <div class="t rowh" style="left:14px;top:247px">2</div>
 <div class="t rowh" style="left:14px;top:497px">3</div>
 <!-- cells area -->
 <div class="a" style="left:37px;top:25px;width:1857px;height:620px;background:#fff"></div>
 <div class="a" style="left:37px;top:25px;width:1857px;height:25px;background:#44546a"></div>
 <div class="a" style="left:0;top:24px;width:37px;height:1px;background:linear-gradient(90deg,#f0f0f0,#c6c6c6 60%)"></div>
 <!-- gridlines -->
 <div class="a gl" style="left:226px;top:49px;width:1px;height:596px"></div>
 <div class="a gl" style="left:694px;top:49px;width:1px;height:596px"></div>
 <div class="a gl" style="left:1008px;top:49px;width:1px;height:596px"></div>
 <div class="a gl" style="left:1283px;top:49px;width:1px;height:596px"></div>
 <div class="a gl" style="left:1576px;top:49px;width:1px;height:596px"></div>
 <div class="a gl" style="left:37px;top:265px;width:1857px;height:1px"></div>
 <div class="a gl" style="left:37px;top:515px;width:1857px;height:1px"></div>
 <!-- selection G4 -->
 <div class="a" style="left:1283px;top:515px;width:294px;height:140px;border:2px solid #107c41"></div>
 <!-- header texts -->
 <div class="hd" style="left:22px;width:204px">TC ID</div>
 <div class="hd" style="left:226px;width:468px">Test Case Title</div>
 <div class="hd" style="left:694px;width:314px">Description</div>
 <div class="hd" style="left:1008px;width:275px">Preconditions</div>
 <div class="hd" style="left:1283px;width:293px">Environment</div>
 <div class="hd" style="left:1576px;width:378px">Test Steps</div>
 <!-- row 2 : top 50 h 215 -->
 <div class="cell" style="left:22px;top:50px;width:204px;height:215px">TC_001</div>
 <div class="cell b" style="left:226px;top:50px;width:468px;height:215px">Validate That user login successfully , When user<br>login using valid email and password</div>
 <div class="cell" style="left:694px;top:50px;width:314px;height:215px">to verify that a registered user can log<br>in successfully with valid credentials</div>
 <div class="cell" style="left:1008px;top:50px;width:275px;height:215px">user already registered with valid<br>email and password +logged out</div>
 <div class="cell" style="left:1283px;top:50px;width:293px;height:215px">1. Operating System: Windows 11<br>Pro (64-bit)<br>2.Browser: Google Chrome (latest<br>stable version, e.g., v140+)<br>3.Device: Desktop/Laptop only (no<br>mobile testing requested)</div>
 <div class="cell" style="left:1576px;top:50px;width:378px;height:215px">1. Enter valid email<br>2. Enter valid password<br>3. Click on login button</div>
 <!-- row 3 : top 266 h 249 -->
 <div class="cell" style="left:22px;top:266px;width:204px;height:249px">TC_002</div>
 <div class="cell b" style="left:226px;top:266px;width:468px;height:249px">Validate That an error message is displayed<br>When user login using invald email or password</div>
 <div class="cell" style="left:694px;top:266px;width:314px;height:249px">To verify that login fails with incorrect<br>credentials.</div>
 <div class="cell" style="left:1008px;top:266px;width:275px;height:249px">User logged out.</div>
 <div class="cell" style="left:1283px;top:266px;width:293px;height:249px">1. Operating System: Windows 11<br>Pro (64-bit)<br>2.Browser: Google Chrome (latest<br>stable version, e.g., v140+)<br>3.Device: Desktop/Laptop only (no<br>mobile testing requested)</div>
 <div class="a" style="left:1577px;top:266px;width:317px;height:249px;overflow:hidden"><div class="cell" style="left:-1px;top:0;width:378px;height:249px"><div style="width:378px"><div style="text-align:left;padding-left:64px">1. enter an invalid email or password</div>2. click on the login button</div></div></div>
 <!-- row 4 partial -->
 <div class="cell" style="left:1283px;top:516px;width:293px;height:auto;display:block;padding-top:73px">1. Operating System: Windows 11<br>Pro (64-bit)<br>2.Browser: Google Chrome (latest</div>
 <div class="a" style="left:1577px;top:516px;width:317px;height:129px;overflow:hidden"><div class="cell" style="left:-1px;top:0;width:378px;height:auto;display:block;padding-top:111px">1. Leave the Email field empty .</div></div>
 <!-- vertical scrollbar -->
 <div class="a" style="left:1896px;top:2px;width:22px;height:645px;background:#f5f5f5;border-radius:11px"></div>
 <svg style="left:1902px;top:6px" width="11" height="8"><path d="M5.5 0 L11 8 L0 8Z" fill="#6e6e6e"/></svg>
 <div class="a" style="left:1902px;top:21px;width:11px;height:64px;background:#6e6e6e;border-radius:6px"></div>
 <svg style="left:1902px;top:633px" width="11" height="8"><path d="M0 0 L11 0 L5.5 8Z" fill="#6e6e6e"/></svg>
</div>
<!-- SHEET TABS -->
<div class="a" style="left:0;top:953px;width:1894px;height:8px;background:#fff"></div>
<div class="a" style="left:0;top:980px;width:1920px;height:13px;background:#f0f0f0"></div>
<div class="a" style="left:0;top:953px;width:141px;height:40px;background:#f0f0f0;border-top-right-radius:6px"></div>
<div class="a" style="left:231px;top:953px;width:1689px;height:40px;background:#f0f0f0;border-top-left-radius:6px"></div>
<div class="a" style="left:141px;top:953px;width:90px;height:35px;background:#fafafa;border-radius:0 0 6px 6px;box-shadow:0 1px 1px rgba(0,0,0,.1)"></div>
<svg style="left:31px;top:966px" width="9" height="12" viewBox="0 0 9 12" fill="none" stroke="#8a8a8a" stroke-width="1.2"><path d="M8 0.5 L1.2 6 L8 11.5"/></svg>
<svg style="left:72px;top:966px" width="9" height="12" viewBox="0 0 9 12" fill="none" stroke="#8a8a8a" stroke-width="1.2"><path d="M1 0.5 L7.8 6 L1 11.5"/></svg>
<div class="t" style="left:151px;top:962px;font-size:16.7px;color:#242424;-webkit-text-stroke:0.35px #242424">TestCase</div>
<div class="a" style="left:151px;top:982px;width:70px;height:2px;background:#107c41"></div>
<div class="a" style="left:236px;top:961px;width:1px;height:24px;background:#c8c8c8"></div>
<div class="t" style="left:254px;top:964px;font-size:17.3px;color:#242424">bugReport</div>
<div class="a" style="left:352px;top:961px;width:1px;height:24px;background:#c8c8c8"></div>
<svg style="left:405px;top:965px" width="15" height="15" viewBox="0 0 15 15" fill="none" stroke="#333" stroke-width="1.4"><path d="M7.5 0 V15 M0 7.5 H15"/></svg>

<div class="a" style="left:1154px;top:966px;width:3px;height:3px;background:#444;border-radius:50%"></div>
<div class="a" style="left:1154px;top:972px;width:3px;height:3px;background:#444;border-radius:50%"></div>
<div class="a" style="left:1154px;top:978px;width:3px;height:3px;background:#444;border-radius:50%"></div>
<div class="a" style="left:1176px;top:962px;width:720px;height:21px;background:#f5f5f5;border-radius:11px"></div>
<svg style="left:1183px;top:966px" width="8" height="12" viewBox="0 0 8 12"><path d="M8 0 V12 L0 6Z" fill="#6e6e6e"/></svg>
<div class="a" style="left:1294px;top:967px;width:289px;height:11px;background:#6e6e6e;border-radius:6px"></div>
<svg style="left:1883px;top:966px" width="8" height="12" viewBox="0 0 8 12"><path d="M0 0 V12 L8 6Z" fill="#6e6e6e"/></svg>
<!-- STATUS -->
<div class="a" style="left:0;top:993px;width:1920px;height:24px;background:#f3f3f3;border-top:1px solid #fff"></div>
<div class="t" style="left:15px;top:1001px;font-size:12.4px;color:#424242">Ready</div>
<svg style="left:76px;top:998px" width="19" height="19" viewBox="0 0 19 19" fill="none" stroke="#222" stroke-width="1.3" stroke-linecap="round">
 <circle cx="7.8" cy="3.4" r="2.2"/>
 <path d="M6 6.8 C4.5 6.3 1.2 6.8 0.9 4.8 C0.7 2.8 3.5 3 5.6 4.8 C7 6 8.8 6 10.2 4.8 C12.2 3 14.9 3.2 14.8 5 C14.7 6.6 12.8 6.6 11.3 7.8"/>
 <path d="M6 6.8 C6.6 9.5 6.2 12.5 5 15 C4.2 17 5.8 18.2 7 16.8 C7.6 15.8 8 14 8.5 12.2 C9.3 12.8 9.3 14 9.6 14.5"/>
 <path d="M9.8 9.2 L17.8 17.8 M17.8 9.2 L9.8 17.8" stroke-width="1.1"/>
</svg>
<div class="t" style="left:99px;top:1001px;font-size:12.6px;font-weight:700;color:#242424">Accessibility: Investigate</div>
<div class="a" style="left:1547px;top:994px;width:50px;height:23px;background:#e0e0e0"></div>
<svg style="left:1563px;top:998px" width="17" height="16" viewBox="0 0 17 16" fill="none" stroke="#333" stroke-width="1.2"><rect x="0.6" y="0.6" width="15.8" height="14.8"/><path d="M5.8 0.6 V15.4 M11.2 0.6 V15.4 M0.6 5.5 H16.4 M0.6 10.5 H16.4"/></svg>
<svg style="left:1613px;top:998px" width="18" height="16" viewBox="0 0 18 16" fill="none" stroke="#333" stroke-width="1.1"><rect x="0.6" y="0.6" width="16.8" height="14.8"/><rect x="4.5" y="3" width="9" height="10"/><path d="M6.5 5.5 H11.5 M6.5 8 H11.5 M6.5 10.5 H11.5"/></svg>
<svg style="left:1663px;top:998px" width="18" height="16" viewBox="0 0 18 16" fill="none" stroke="#333" stroke-width="1.2"><path d="M0.6 0.6 H17.4 V15.4 H0.6 Z M0.6 8.5 H12 V0.6 M6 0.6 V8.5"/></svg>
<div class="a" style="left:1705px;top:1007px;width:8px;height:1px;background:#444"></div>
<div class="a" style="left:1720px;top:1007px;width:125px;height:1px;background:#888"></div>
<div class="a" style="left:1781px;top:1000px;width:6px;height:14px;background:#666;border-radius:1px"></div>
<svg style="left:1851px;top:1002px" width="10" height="10" viewBox="0 0 10 10" fill="none" stroke="#444" stroke-width="1.1"><path d="M5 0 V10 M0 5 H10"/></svg>
<div class="t" style="left:1877px;top:1003px;font-size:12.6px;color:#424242">104%</div>
<!-- watermark -->
<svg style="left:845px;top:951px" width="232" height="46" viewBox="0 0 232 46" fill="none" stroke="#dadada" stroke-width="6.8">
 <path d="M3.4 14 V30 Q3.4 41 15 41 H48 Q52 41 52 30 V14"/>
 <path d="M21 1 l6 6 l-6 6 l-6 -6z M36 0.5 l6 6 l-6 6 l-6 -6z M207 1.5 l6 6 l-6 6 l-6 -6z" fill="#dadada" stroke="none"/>
 <path d="M62.2 0 V41"/>
 <path d="M59 41 H229"/>
 <path d="M93 15 V41 M132 15 V41"/>
 <path d="M151 0 V20 M145 3.3 H175"/>
 <path d="M145 28 C150 18 158 15 165 16 C173 18 177 25 177 30 C177 37 170 41 160 41"/>
 <path d="M192 24 L205 17 C220 14 226 22 226 32 V41"/>
</svg>
</body></html>
